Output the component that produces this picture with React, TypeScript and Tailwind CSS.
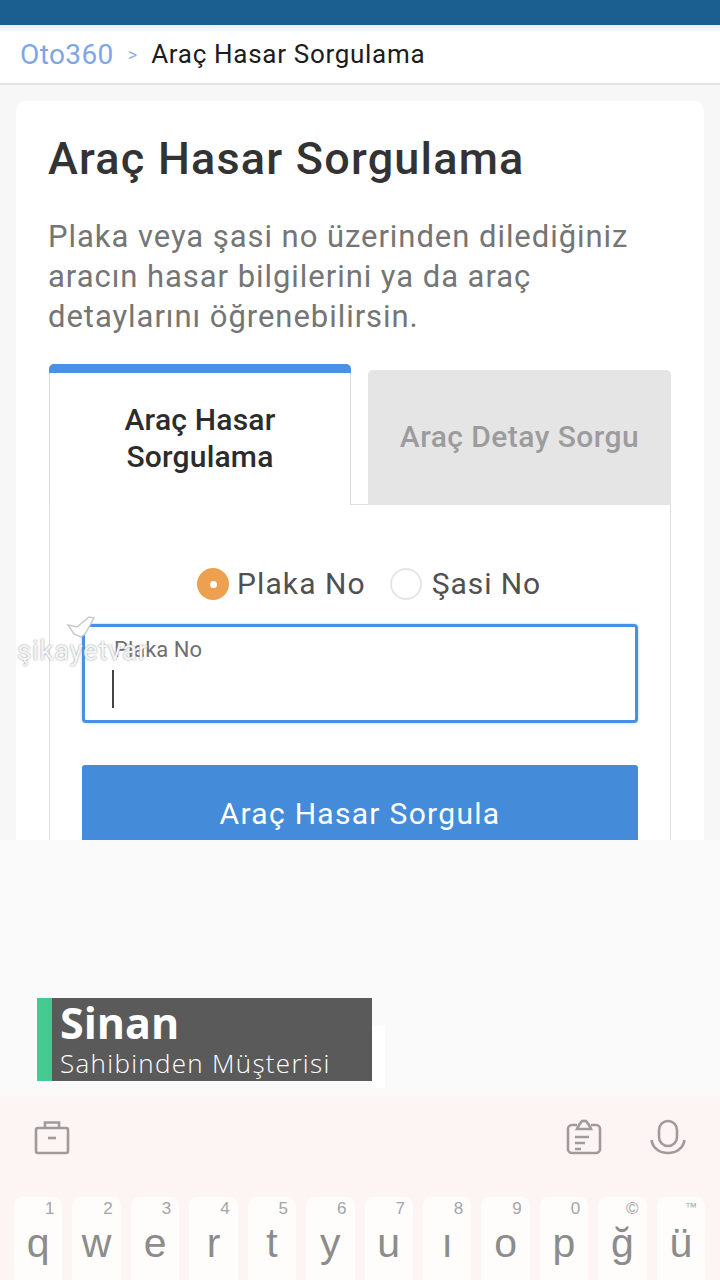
import React from "react";

const keys = [
  { letter: "q", hint: "1" },
  { letter: "w", hint: "2" },
  { letter: "e", hint: "3" },
  { letter: "r", hint: "4" },
  { letter: "t", hint: "5" },
  { letter: "y", hint: "6" },
  { letter: "u", hint: "7" },
  { letter: "ı", hint: "8" },
  { letter: "o", hint: "9" },
  { letter: "p", hint: "0" },
  { letter: "ğ", hint: "©" },
  { letter: "ü", hint: "™" },
];

function CaseIcon() {
  return (
    <svg width="36" height="36" viewBox="0 0 36 36" fill="none" stroke="#a09b9b" strokeWidth="2.6">
      <rect x="2" y="9" width="32" height="25" rx="2" />
      <path d="M11 9V3.500h14V9" />
      <path d="M14 19h8" />
    </svg>
  );
}

function ClipIcon() {
  return (
    <svg width="36" height="36" viewBox="0 0 36 36" fill="none" stroke="#a09b9b" strokeWidth="2.6">
      <path d="M11 6H6a4 4 0 0 0-4 4v20a4 4 0 0 0 4 4h24a4 4 0 0 0 4-4V10a4 4 0 0 0-4-4h-5" />
      <path d="M11 10l2-4 3-4h4l3 4 2 4z" />
      <path d="M9 18h14M9 24h10M9 30h6" />
    </svg>
  );
}

function MicIcon() {
  return (
    <svg width="36" height="36" viewBox="0 0 36 36" fill="none" stroke="#a09b9b" strokeWidth="2.6">
      <rect x="9" y="2" width="18" height="25" rx="9" />
      <path d="M1.500 21c1 8 8 13 16.500 13s15.500-5 16.500-13" />
    </svg>
  );
}

export default function App() {
  return (
    <div className="flex h-[1280px] w-[720px] flex-col overflow-hidden bg-[#fafafa] font-['Roboto',sans-serif]">
      <div className="h-[840px] shrink-0 overflow-hidden bg-[#f7f7f7]">
        <div className="h-[25px] bg-[#1b5e90]" />
        <div className="h-[8px] bg-gradient-to-b from-[#e3eef6] to-white" />
        <div className="flex h-[52px] items-center border-b-2 border-[#e2e2e2] bg-white pb-[7px] pl-[20px]">
          <span className="text-[28px] tracking-[0.4px] text-[#7ea6e6]">Oto360</span>
          <span className="ml-[14px] text-[18px] text-[#8fb0e6]">&gt;</span>
          <span className="ml-[14px] text-[26px] tracking-[0.7px] text-[#1c1c1c]">Araç Hasar Sorgulama</span>
        </div>

        <div className="mx-[16px] mt-[16px] h-[800px] rounded-t-[10px] bg-white px-[32px] pt-[30px]">
          <h1 className="text-[45px] leading-[56px] font-medium tracking-[1.2px] text-[#333333]">
            Araç Hasar Sorgulama
          </h1>
          <p className="mt-[30px] text-[31px] leading-[40px] tracking-[0.95px] text-[#757575]">
            Plaka veya şasi no üzerinden dilediğiniz
            <br />
            aracın hasar bilgilerini ya da araç
            <br />
            detaylarını öğrenebilirsin.
          </p>

          <div className="mt-[27px] ml-[1px] w-[622px]">
            <div className="flex h-[141px] items-end">
              <div className="flex h-[141px] w-[302px] flex-col rounded-t-[5px] border-x border-[#d9d9d9] bg-white">
                <div className="-mx-px h-[9px] rounded-t-[5px] bg-[#4a90e6]" />
                <div className="pt-[28px] text-center text-[30px] leading-[37px] font-medium tracking-[0.2px] text-[#2c2c2c]">
                  Araç Hasar
                  <br />
                  Sorgulama
                </div>
              </div>
              <div className="h-px w-[17px] bg-[#dddddd]" />
              <div className="flex h-[135px] w-[303px] items-start justify-center rounded-t-[5px] bg-[#e5e5e5] pt-[47px] text-[30px] leading-[40px] font-medium tracking-[0.45px] text-[#9c9c9c]">
                Araç Detay Sorgu
              </div>
            </div>

            <div className="h-[400px] border-x border-[#dddddd] bg-white px-[32px]">
              <div className="flex items-center justify-center pt-[60px] pl-[18px]">
                <span className="flex size-[32px] items-center justify-center rounded-full bg-[#eda04f]">
                  <span className="size-[7px] rounded-full bg-white" />
                </span>
                <span className="ml-[8px] text-[30px] leading-[38px] tracking-[1.1px] text-[#505050]">Plaka No</span>
                <span className="ml-[24px] size-[32px] rounded-full border-2 border-[#e6e6e6] bg-white" />
                <span className="ml-[10px] text-[30px] leading-[38px] tracking-[0.9px] text-[#505050]">Şasi No</span>
              </div>

              <div className="mt-[21px] h-[99px] rounded-[4px] border-[3px] border-[#4a90e2] pt-[8px] pl-[29px] shadow-[0_0_3px_#a9cdf5]">
                <div className="text-[22px] leading-[30px] text-[#6f6f6f]">Plaka No</div>
                <div className="mt-[5px] -ml-[2px] h-[38px] w-[2px] bg-[#444444]" />
              </div>

              <div className="mt-[42px] h-[80px] rounded-t-[3px] bg-[#448bd9] pt-[29px] text-center text-[30px] leading-[40px] tracking-[1.3px] text-white">
                Araç Hasar Sorgula
              </div>
            </div>
          </div>
        </div>
      </div>

      <div className="h-[255px] shrink-0 pt-[158px] pl-[37px]">
        <div className="flex items-start">
          <div className="flex h-[83px] w-[335px] bg-[#5a5a5a]">
            <div className="h-full w-[15px] bg-[#45cb92]" />
            <div className="pl-[8px]">
              <div className="font-['Open_Sans',sans-serif] text-[43px] leading-[50px] font-bold text-white">Sinan</div>
              <div className="font-['Open_Sans',sans-serif] text-[26px] leading-[30px] font-light tracking-[1.3px] text-white">
                Sahibinden Müşterisi
              </div>
            </div>
          </div>
          <div className="mt-[28px] h-[62px] w-[13px] bg-white" />
        </div>
      </div>

      <div className="flex-1 bg-gradient-to-b from-[#fdf7f7] to-[#fdf4f4] to-[20px]">
        <div className="flex h-[102px] items-center justify-between pr-[34px] pb-[18px] pl-[34px]">
          <CaseIcon />
          <div className="flex gap-[48px]">
            <ClipIcon />
            <MicIcon />
          </div>
        </div>
        <div className="grid grid-cols-12 gap-x-[10px] pr-[15px] pl-[14px]">
          {keys.map((k) => (
            <div key={k.letter} className="h-[83px] rounded-t-[8px] bg-[#fffcfc] text-center">
              <div
                className={
                  k.hint === "™"
                    ? "pr-[8px] text-right font-['Liberation_Sans',sans-serif] text-[12px] leading-[20px] text-[#a5a5a5]"
                    : "pr-[8px] text-right font-['Liberation_Sans',sans-serif] text-[17px] leading-[24px] text-[#a5a5a5]"
                }
              >
                {k.hint}
              </div>
              <div
                className={
                  k.hint === "™"
                    ? "pt-[4px] font-['Liberation_Sans',sans-serif] text-[41px] leading-[44px] text-[#8c8c8c]"
                    : "font-['Liberation_Sans',sans-serif] text-[41px] leading-[44px] text-[#8c8c8c]"
                }
              >
                {k.letter}
              </div>
            </div>
          ))}
        </div>
      </div>

      <div className="absolute top-[615px] left-[17px] text-[28px] leading-[72px] tracking-[0.5px] text-[#f4f4f4] [text-shadow:0_0_2px_#8a8a8a]">
        <svg className="absolute top-0 left-[48px]" width="32" height="26" viewBox="0 0 32 26" fill="#ffffff" stroke="#c9c9c9" strokeWidth="1.5">
          <path d="M3 10l9 2 12-10 5 1-9 16-4 3-7-3z" />
        </svg>
        şikayetvar
      </div>
    </div>
  );
}
